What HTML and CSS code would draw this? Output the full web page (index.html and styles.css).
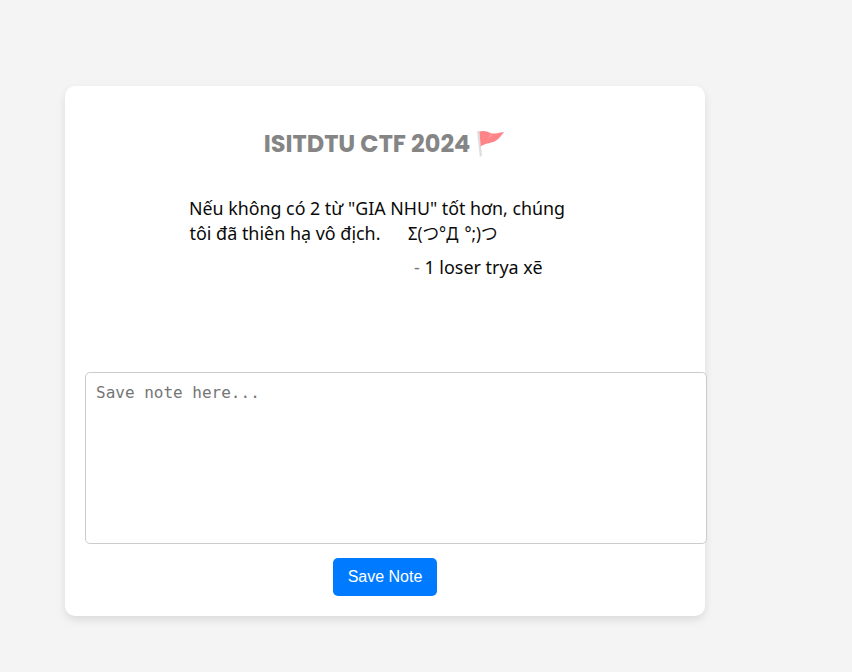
FILE: index.html
```
<!DOCTYPE html>
<html lang="en">
<head>
    <meta charset="UTF-8">
    <title>ISITDTU CTF 2024</title>
    <meta name="viewport" content="width=device-width, initial-scale=1.0">
    <link rel="stylesheet" href="styles.css">
</head>
<body>
    <div class="container">
        <h1 class="title">
            <span>ISITDTU CTF 2024</span>
            <svg class="flag" viewBox="0 0 28 28">
                <path d="M0 2.3L2.4 1.8L5 27L2.8 27.8Z" fill="#dedede"/>
                <path d="M2.4 2.6C6 1.3 10 2.3 13.5 4C18 5.8 22 2.8 27.2 3.2C24.5 5.3 22.5 9.8 18 12.3C13 14.8 9 13.8 3.7 17.6Z" fill="#ff8487"/>
                <path d="M13 4.5L10 11L16 6.5Z" fill="#ff9396"/>
            </svg>
        </h1>
        <svg class="banner" viewBox="0 0 400 160">
            <text x="4" y="32.5" textLength="376" lengthAdjust="spacingAndGlyphs">Nếu không có 2 từ "GIA NHU" tốt hơn, chúng</text>
            <text x="4.5" y="57.5" textLength="191" lengthAdjust="spacingAndGlyphs">tôi đã thiên hạ vô địch.</text>
            <text class="face" x="223" y="57.5" textLength="89.5" lengthAdjust="spacingAndGlyphs">Σ(つ°Д °;)つ</text>
            <text x="229" y="91.5" textLength="128.5" lengthAdjust="spacingAndGlyphs"><tspan class="dash">-</tspan> 1 loser trya xẽ</text>
        </svg>
        <form class="noteForm" onsubmit="return false">
            <textarea class="note" placeholder="Save note here..."></textarea>
            <button class="saveButton" type="submit">Save Note</button>
        </form>
    </div>
</body>
</html>
```
FILE: styles.css
```
body {
    font-family: "Liberation Sans", Arial, sans-serif;
    background-color: #f4f4f4;
    margin: 0;
    padding: 86px 65px 56px;
}
.container {
    width: 600px;
    height: 490px;
    padding: 20px;
    background-color: #fff;
    border-radius: 10px;
    box-shadow: 0 4px 8px rgba(0, 0, 0, 0.1);
}
.title {
    display: flex;
    justify-content: center;
    align-items: center;
    gap: 7px;
    height: 36px;
    margin: 19px 0 21px;
    padding-right: 1px;
    font-family: Poppins, Inter, sans-serif;
    font-size: 24px;
    font-weight: 700;
    color: #858585;
    white-space: nowrap;
}
.flag {
    width: 28px;
    height: 28px;
}
.banner {
    display: block;
    width: 400px;
    height: 160px;
    margin: 0 auto 30px;
    font-family: "Noto Sans", "Noto Sans CJK JP", sans-serif;
    font-size: 18px;
    fill: #0a0a0a;
}
.face {
    word-spacing: 2px;
}
.dash {
    fill: #777;
}
.noteForm {
    text-align: center;
}
.note {
    display: block;
    width: 100%;
    height: 150px;
    padding: 10px;
    margin-bottom: 14px;
    border: 1px solid #ccc;
    border-radius: 5px;
    font-family: "DejaVu Sans Mono", monospace;
    font-size: 16px;
    resize: none;
}
.saveButton {
    padding: 10px 15px;
    border: none;
    border-radius: 5px;
    background-color: #007bff;
    color: #fff;
    font-family: "Liberation Sans", Arial, sans-serif;
    font-size: 16px;
    cursor: pointer;
}
```
